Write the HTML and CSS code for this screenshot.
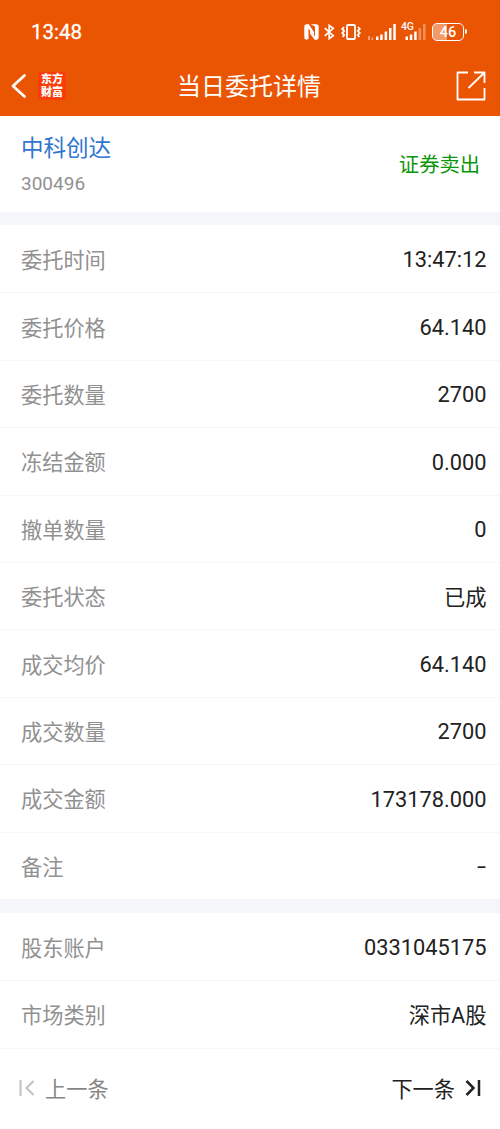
FILE: index.html
```html
<!DOCTYPE html>
<html lang="zh-CN">
<head>
  <meta charset="utf-8">
  <title>当日委托详情</title>
  <meta name="viewport" content="width=device-width,initial-scale=1">
  <link rel="stylesheet" href="styles.css">
</head>
<body>

  <header class="top">
    <div class="status">
      <span class="clock">13:48</span>
      <div class="status-icons">
        <!-- NFC -->
        <svg class="nfc" width="15" height="16" viewBox="0 0 15 16">
          <path fill="#fff" d="M2.2 .3h2.600l5.200 8v3L4.500 4.500v10.500L2.2 15.700Q.3 15.500.3 13.500v-11Q.3.5 2.2.3z"/>
          <path fill="#fff" d="M6.500.3h6.300q1.900.2 1.900 2.200v11q0 2-1.900 2.200h-2.200L6 9.500V6.300l5 6.200V2.500z"/>
        </svg>
        <!-- Bluetooth -->
        <svg class="bt" width="11" height="16" viewBox="0 0 11 16">
          <path fill="none" stroke="#fff" stroke-width="1.7" d="M.8 4.200l8.400 7.400-4 3V1.400l4 3L.8 11.800"/>
        </svg>
        <!-- vibrate -->
        <svg class="vib" width="20" height="16" viewBox="0 0 20 16">
          <rect x="6" y="1" width="8" height="14" rx="1" fill="none" stroke="#fff" stroke-width="1.8"/>
          <path fill="none" stroke="#fff" stroke-width="1.8" d="M3 3L1.200 5l2 2-2 2 2 2-1.500 2M17 3l1.800 2-2 2 2 2-2 2 1.500 2"/>
        </svg>
        <!-- signal, sim 1 -->
        <svg class="sig" width="28" height="17" viewBox="0 0 28 17">
          <g fill="#fff">
            <path opacity=".45" d="M0 13h2v4H0zM3.500 14.500h1.700V17H3.500z"/>
            <path d="M8 13.500h2.400V17H8zM12.200 11.500h2.500V17h-2.500zM16.600 8.500h2.500V17h-2.500zM21 5h2.500v12H21zM25.300 1h2.500v16h-2.500z"/>
          </g>
        </svg>
        <!-- signal, sim 2 -->
        <div class="sim2">
          <span class="net">4G</span>
          <svg width="24" height="17" viewBox="0 0 24 17">
            <g fill="#fff">
              <path d="M3.500 13.500h2.500V17H3.500zM7.800 11.500h2.500V17H7.800zM12.200 8.500h2.500V17h-2.500z"/>
              <path opacity=".35" d="M16.600 5h2.500v12h-2.500zM21 1h2.500v16H21z"/>
            </g>
          </svg>
        </div>
        <div class="battery"><span>46</span></div>
      </div>
    </div>

    <div class="titlebar">
      <div class="left">
        <svg width="16" height="26" viewBox="0 0 16 26">
          <path fill="none" stroke="#fff" stroke-width="2.7" stroke-linecap="round" stroke-linejoin="round" d="M13.500 2.500L2 13l11.500 10.500"/>
        </svg>
        <div class="logo">东方财富</div>
      </div>
      <h1>当日委托详情</h1>
      <svg class="share" width="30" height="30" viewBox="0 0 30 30">
        <path fill="none" stroke="#fff" stroke-width="1.8" stroke-linejoin="round" d="M12 1.500H1.500v27h27V17M18 1.500h10.500V12M28.500 1.500L12.500 17"/>
      </svg>
    </div>
  </header>

  <main>
    <section class="stock">
      <div>
        <div class="name">中科创达</div>
        <div class="code">300496</div>
      </div>
      <div class="side">证券卖出</div>
    </section>

    <section class="list">
      <div class="row"><span class="label">委托时间</span><span class="value">13:47:12</span></div>
      <div class="row"><span class="label">委托价格</span><span class="value">64.140</span></div>
      <div class="row"><span class="label">委托数量</span><span class="value">2700</span></div>
      <div class="row"><span class="label">冻结金额</span><span class="value">0.000</span></div>
      <div class="row"><span class="label">撤单数量</span><span class="value">0</span></div>
      <div class="row"><span class="label">委托状态</span><span class="value zh">已成</span></div>
      <div class="row"><span class="label">成交均价</span><span class="value">64.140</span></div>
      <div class="row"><span class="label">成交数量</span><span class="value">2700</span></div>
      <div class="row"><span class="label">成交金额</span><span class="value">173178.000</span></div>
      <div class="row"><span class="label">备注</span><span class="value dash">-</span></div>
    </section>

    <section class="list account">
      <div class="row"><span class="label">股东账户</span><span class="value">0331045175</span></div>
      <div class="row"><span class="label">市场类别</span><span class="value zh">深市A股</span></div>
    </section>
  </main>

  <footer class="pager">
    <div class="prev">
      <svg width="16" height="18" viewBox="0 0 16 18">
        <path fill="none" stroke="#c4c4c4" stroke-width="2.200" d="M1.500 1v16M14.500 2L7.500 9l7 7"/>
      </svg>
      <span>上一条</span>
    </div>
    <div class="next">
      <span>下一条</span>
      <svg width="16" height="18" viewBox="0 0 16 18">
        <path fill="none" stroke="#222" stroke-width="2.500" d="M14 1v16M1.500 2l7 7-7 7"/>
      </svg>
    </div>
  </footer>

</body>
</html>
```

FILE: styles.css
```css
/* RESET */
* { box-sizing:border-box; margin:0; padding:0; }
body {
  font-family:Roboto, "Noto Sans CJK SC", sans-serif;
  background:#fff; color:#222;
}
svg { display:block; }

/* HEADER */
.top { height:116px; background:#ea5504; color:#fff; }
.status {
  height:56px; padding:7px 36px 0 31px;
  display:flex; justify-content:space-between; align-items:center;
}
.clock { font-size:20.5px; font-weight:400; line-height:26px; -webkit-text-stroke:.3px #fff; }
.status-icons { display:flex; align-items:center; }
.bt { margin-left:5px; }
.vib { margin-left:6px; }
.sig { margin-left:7px; }
.sim2 { position:relative; margin-left:6px; }
.net {
  position:absolute; left:-1px; top:-2px;
  font-size:10.5px; font-weight:500; line-height:11px; letter-spacing:-.3px;
}
.battery {
  position:relative; margin-left:6px;
  width:32px; height:18px;
  border:1.5px solid #fff; border-radius:5px;
  background:linear-gradient(90deg, #f39a6a 46%, transparent 46%);
  font-size:14.5px; font-weight:500; line-height:17px; text-align:center;
}
.battery::after {
  content:""; position:absolute; right:-4px; top:5px;
  width:2px; height:5px; border-radius:0 2px 2px 0; background:#fff;
}

/* TITLE BAR */
.titlebar {
  height:60px; padding:0 14px 0 11px;
  display:grid; grid-template-columns:1fr auto 1fr; align-items:center;
}
.left { display:flex; align-items:center; gap:11px; }
.logo {
  width:28px; height:28px; border-radius:4px; background:#fb3d0a;
  font-family:"Noto Sans CJK SC", sans-serif;
  font-size:11px; font-weight:900; line-height:13px;
  padding:0 3px; word-break:break-all;
}
h1 { font-size:24px; font-weight:400; line-height:36px; padding:2px 0 0 1px; }
.share { justify-self:end; }

/* STOCK */
.stock {
  height:96px; padding:0 20px 0 21px;
  display:flex; justify-content:space-between; align-items:center;
}
.name { font-size:22.5px; line-height:34px; color:#2f76cf; }
.code { font-size:19px; line-height:28px; margin-top:5px; color:#919191; }
.side { font-size:20.3px; line-height:30px; padding-top:2px; color:#0a960a; }

/* ROWS */
.list { border-top:13px solid #f5f6fa; }
.account { border-top-width:14px; }
.row {
  height:67.4px; padding:0 13.5px 0 21px;
  display:flex; justify-content:space-between; align-items:center;
}
.row + .row { border-top:1px solid #f7f7f7; }
.label { font-size:21.2px; color:#919191; padding-bottom:1px; }
.value { font-size:21.8px; color:#222; padding-top:2px; }
.zh { font-size:21.3px; padding:0 0 1px; }
.dash { transform:scaleX(1.5); transform-origin:right; }

/* PAGER */
.pager {
  height:81px; padding:0 19px 2px 19px;
  display:flex; justify-content:space-between; align-items:center;
  border-top:1px solid #f7f7f7;
  font-size:21.2px;
}
.prev, .next { display:flex; align-items:center; gap:10px; }
.prev { color:#868686; }
```
